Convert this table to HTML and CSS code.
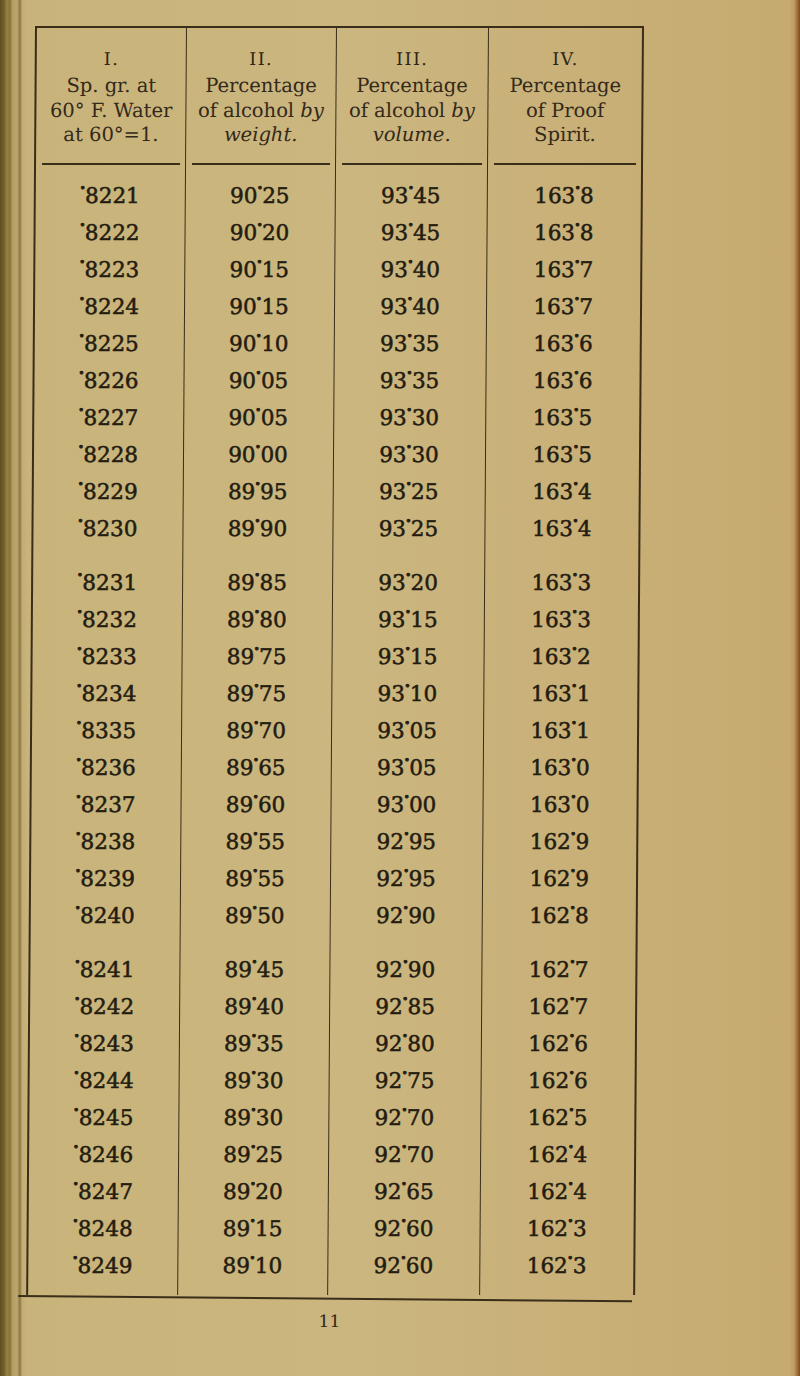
FILE: index.html
```html
<!DOCTYPE html>
<html lang="en">
<head>
<meta charset="utf-8">
<title>Alcohol table</title>
<link rel="stylesheet" href="styles.css">
</head>
<body>
<div class="page">
  <div class="sheet">
    <table class="tbl">
      <colgroup>
        <col class="c1"><col class="c2"><col class="c3"><col class="c4">
      </colgroup>
      <thead>
        <tr>
          <th><div class="hd"><div class="num">I.</div><div class="txt">Sp. gr. at<br>60° F. Water<br>at 60°=1.</div></div></th>
          <th><div class="hd"><div class="num">II.</div><div class="txt">Percentage<br>of alcohol <em>by</em><br><em>weight.</em></div></div></th>
          <th><div class="hd"><div class="num">III.</div><div class="txt">Percentage<br>of alcohol <em>by</em><br><em>volume.</em></div></div></th>
          <th><div class="hd"><div class="num">IV.</div><div class="txt">Percentage<br>of Proof<br>Spirit.</div></div></th>
        </tr>
      </thead>
      <tbody>
        <tr class="first"><td><span class="pt">·</span>8221</td><td>90<span class="pt">·</span>25</td><td>93<span class="pt">·</span>45</td><td>163<span class="pt">·</span>8</td></tr>
        <tr><td><span class="pt">·</span>8222</td><td>90<span class="pt">·</span>20</td><td>93<span class="pt">·</span>45</td><td>163<span class="pt">·</span>8</td></tr>
        <tr><td><span class="pt">·</span>8223</td><td>90<span class="pt">·</span>15</td><td>93<span class="pt">·</span>40</td><td>163<span class="pt">·</span>7</td></tr>
        <tr><td><span class="pt">·</span>8224</td><td>90<span class="pt">·</span>15</td><td>93<span class="pt">·</span>40</td><td>163<span class="pt">·</span>7</td></tr>
        <tr><td><span class="pt">·</span>8225</td><td>90<span class="pt">·</span>10</td><td>93<span class="pt">·</span>35</td><td>163<span class="pt">·</span>6</td></tr>
        <tr><td><span class="pt">·</span>8226</td><td>90<span class="pt">·</span>05</td><td>93<span class="pt">·</span>35</td><td>163<span class="pt">·</span>6</td></tr>
        <tr><td><span class="pt">·</span>8227</td><td>90<span class="pt">·</span>05</td><td>93<span class="pt">·</span>30</td><td>163<span class="pt">·</span>5</td></tr>
        <tr><td><span class="pt">·</span>8228</td><td>90<span class="pt">·</span>00</td><td>93<span class="pt">·</span>30</td><td>163<span class="pt">·</span>5</td></tr>
        <tr><td><span class="pt">·</span>8229</td><td>89<span class="pt">·</span>95</td><td>93<span class="pt">·</span>25</td><td>163<span class="pt">·</span>4</td></tr>
        <tr><td><span class="pt">·</span>8230</td><td>89<span class="pt">·</span>90</td><td>93<span class="pt">·</span>25</td><td>163<span class="pt">·</span>4</td></tr>
        <tr class="brk"><td><span class="pt">·</span>8231</td><td>89<span class="pt">·</span>85</td><td>93<span class="pt">·</span>20</td><td>163<span class="pt">·</span>3</td></tr>
        <tr><td><span class="pt">·</span>8232</td><td>89<span class="pt">·</span>80</td><td>93<span class="pt">·</span>15</td><td>163<span class="pt">·</span>3</td></tr>
        <tr><td><span class="pt">·</span>8233</td><td>89<span class="pt">·</span>75</td><td>93<span class="pt">·</span>15</td><td>163<span class="pt">·</span>2</td></tr>
        <tr><td><span class="pt">·</span>8234</td><td>89<span class="pt">·</span>75</td><td>93<span class="pt">·</span>10</td><td>163<span class="pt">·</span>1</td></tr>
        <tr><td><span class="pt">·</span>8335</td><td>89<span class="pt">·</span>70</td><td>93<span class="pt">·</span>05</td><td>163<span class="pt">·</span>1</td></tr>
        <tr><td><span class="pt">·</span>8236</td><td>89<span class="pt">·</span>65</td><td>93<span class="pt">·</span>05</td><td>163<span class="pt">·</span>0</td></tr>
        <tr><td><span class="pt">·</span>8237</td><td>89<span class="pt">·</span>60</td><td>93<span class="pt">·</span>00</td><td>163<span class="pt">·</span>0</td></tr>
        <tr><td><span class="pt">·</span>8238</td><td>89<span class="pt">·</span>55</td><td>92<span class="pt">·</span>95</td><td>162<span class="pt">·</span>9</td></tr>
        <tr><td><span class="pt">·</span>8239</td><td>89<span class="pt">·</span>55</td><td>92<span class="pt">·</span>95</td><td>162<span class="pt">·</span>9</td></tr>
        <tr><td><span class="pt">·</span>8240</td><td>89<span class="pt">·</span>50</td><td>92<span class="pt">·</span>90</td><td>162<span class="pt">·</span>8</td></tr>
        <tr class="brk"><td><span class="pt">·</span>8241</td><td>89<span class="pt">·</span>45</td><td>92<span class="pt">·</span>90</td><td>162<span class="pt">·</span>7</td></tr>
        <tr><td><span class="pt">·</span>8242</td><td>89<span class="pt">·</span>40</td><td>92<span class="pt">·</span>85</td><td>162<span class="pt">·</span>7</td></tr>
        <tr><td><span class="pt">·</span>8243</td><td>89<span class="pt">·</span>35</td><td>92<span class="pt">·</span>80</td><td>162<span class="pt">·</span>6</td></tr>
        <tr><td><span class="pt">·</span>8244</td><td>89<span class="pt">·</span>30</td><td>92<span class="pt">·</span>75</td><td>162<span class="pt">·</span>6</td></tr>
        <tr><td><span class="pt">·</span>8245</td><td>89<span class="pt">·</span>30</td><td>92<span class="pt">·</span>70</td><td>162<span class="pt">·</span>5</td></tr>
        <tr><td><span class="pt">·</span>8246</td><td>89<span class="pt">·</span>25</td><td>92<span class="pt">·</span>70</td><td>162<span class="pt">·</span>4</td></tr>
        <tr><td><span class="pt">·</span>8247</td><td>89<span class="pt">·</span>20</td><td>92<span class="pt">·</span>65</td><td>162<span class="pt">·</span>4</td></tr>
        <tr><td><span class="pt">·</span>8248</td><td>89<span class="pt">·</span>15</td><td>92<span class="pt">·</span>60</td><td>162<span class="pt">·</span>3</td></tr>
        <tr class="last"><td><span class="pt">·</span>8249</td><td>89<span class="pt">·</span>10</td><td>92<span class="pt">·</span>60</td><td>162<span class="pt">·</span>3</td></tr>
      </tbody>
    </table>
    <div class="bottom-rule"></div>
    <div class="folio">11</div>
  </div>
</div>
</body>
</html>
```
FILE: styles.css
```css
html, body {
  margin: 0;
  padding: 0;
}
body {
  width: 800px;
  height: 1376px;
  overflow: hidden;
  color: #241c10;
  font-family: "DejaVu Serif", "Liberation Serif", serif;
  background:
    linear-gradient(to right,
      #5f4c20 0px, #75602c 4px, #988244 7px, #84703a 10px,
      #b09a5e 12px, #bea86e 17px, #8a7642 20px, #c2ac73 22px,
      rgba(201,180,124,0) 27px),
    linear-gradient(to left,
      #7c4a1e 0px, #a5733c 3px, #c29c64 6px, rgba(199,171,114,0) 11px),
    linear-gradient(to right, #c8b37a 0%, #cbb67f 45%, #c6aa70 100%);
}
.page {
  padding: 26px 0 0 35px;
}
.sheet {
  width: 607px;
  transform: skewX(-0.4deg);
  transform-origin: 0 0;
}
.tbl {
  width: 607px;
  table-layout: fixed;
  border-collapse: collapse;
  border-top: 2px solid #3a2d19;
  border-left: 2px solid #3a2d19;
  border-right: 2px solid #3a2d19;
}
.c1 { width: 150px; }
.c2 { width: 150px; }
.c3 { width: 152px; }
.c4 { width: 155px; }
.tbl th,
.tbl td {
  padding: 0;
  text-align: center;
}
.tbl th + th,
.tbl td + td {
  border-left: 1.5px solid #3a2d19;
}
.tbl th {
  vertical-align: top;
  font-weight: normal;
  padding-top: 16px;
}
.hd {
  margin: 0 5px 0 6px;
  padding-bottom: 15px;
  border-bottom: 2px solid #3a2d19;
}
.num {
  font-size: 17.5px;
  line-height: 30px;
  letter-spacing: 1.5px;
  color: #2e2516;
}
.txt {
  font-size: 19.5px;
  line-height: 24.5px;
  color: #33291a;
  white-space: nowrap;
}
.txt em {
  font-style: italic;
}
.tbl td {
  font-size: 21.5px;
  line-height: 37px;
  white-space: nowrap;
  -webkit-text-stroke: 0.55px #241c10;
}
.tbl tr.first td {
  padding-top: 12px;
}
.tbl tr.brk td {
  padding-top: 17px;
}
.tbl tr.last td {
  padding-bottom: 11px;
}
.pt {
  display: inline-block;
  vertical-align: 0.36em;
  line-height: 1;
  margin: 0 -1px;
  -webkit-text-stroke: 1px #241c10;
}
.bottom-rule {
  width: 614px;
  margin-left: -8px;
  border-top: 2px solid #3a2d19;
  transform: rotate(0.5deg);
  transform-origin: 0 0;
}
.folio {
  margin-top: 14px;
  text-align: center;
  font-size: 17px;
  line-height: 20px;
  color: #2e2516;
}
```
